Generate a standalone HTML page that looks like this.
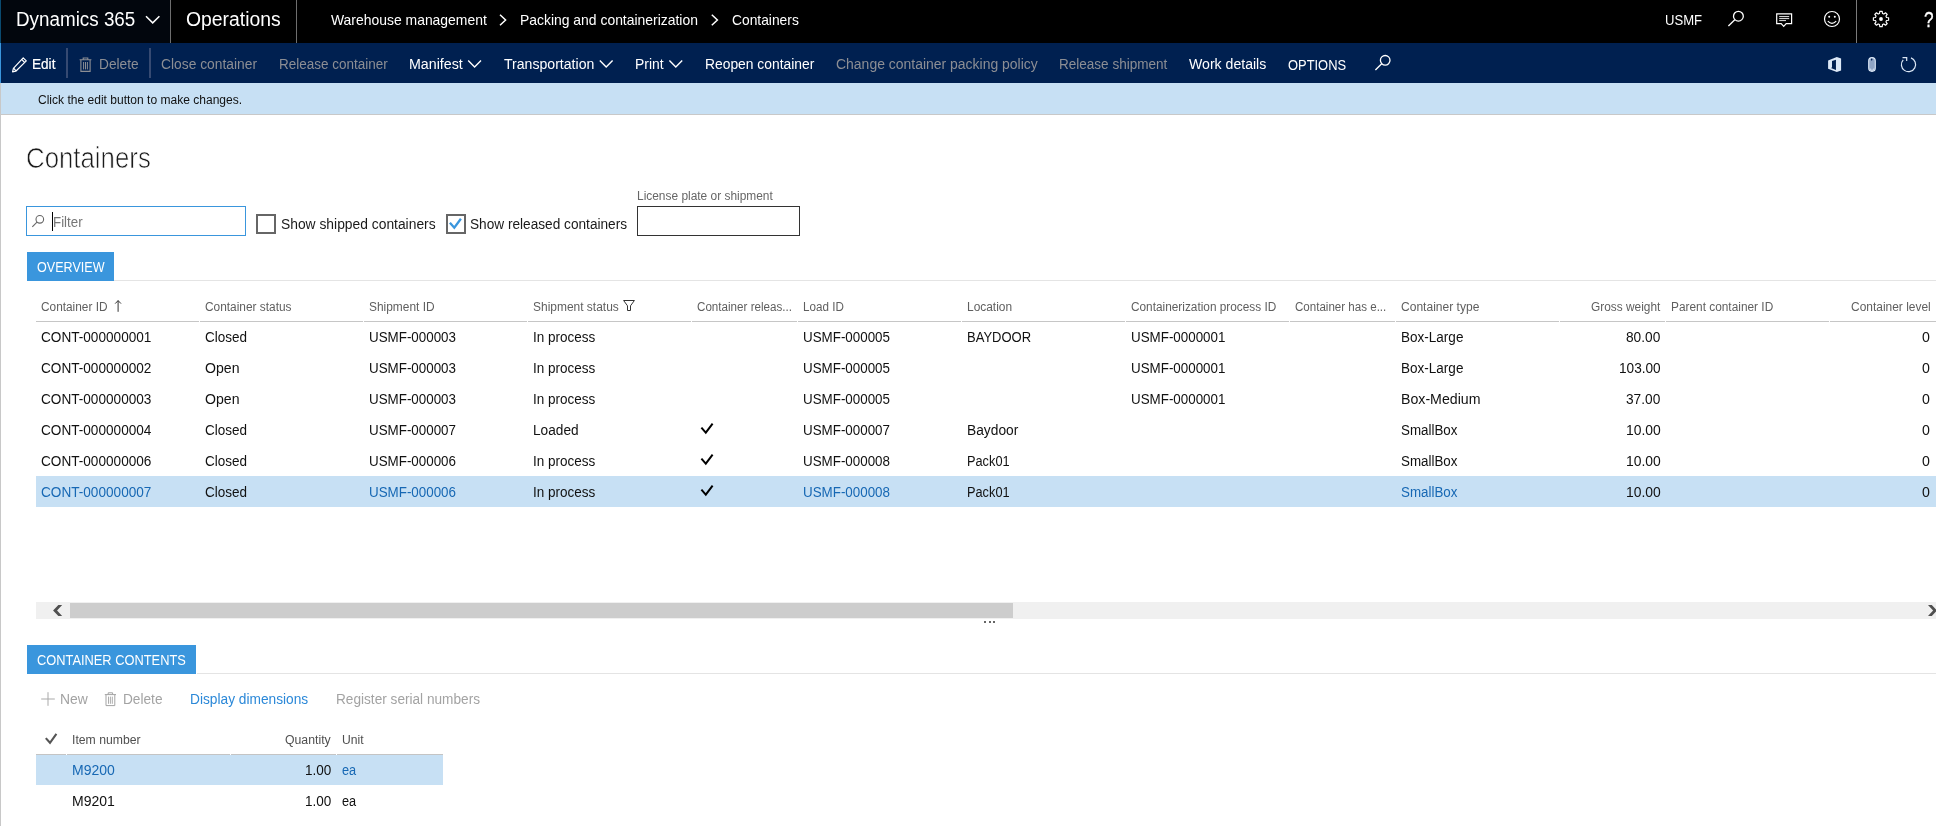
<!DOCTYPE html>
<html><head><meta charset="utf-8"><title>Containers</title>
<style>
html,body{margin:0;padding:0;}
body{width:1936px;height:826px;overflow:hidden;background:#fff;position:relative;font-family:"Liberation Sans",sans-serif;}
.t{position:absolute;white-space:pre;line-height:20px;height:20px;transform-origin:0 0;}
.b{position:absolute;}
svg{position:absolute;overflow:visible;}
</style></head><body>
<!-- bars -->
<div class="b" style="left:0;top:0;width:1936px;height:43px;background:#000"></div>
<div class="b" style="left:0;top:0;width:170px;height:43px;background:#02060d"></div>
<div class="b" style="left:0;top:0;width:1px;height:43px;background:#0a4a70"></div>
<div class="b" style="left:170px;top:0;width:1px;height:43px;background:#6e6e6e"></div>
<div class="b" style="left:296px;top:0;width:1px;height:43px;background:#6e6e6e"></div>
<div class="b" style="left:1856px;top:0;width:1px;height:43px;background:#7a7a7a"></div>
<div class="b" style="left:0;top:43px;width:1936px;height:40px;background:#002050"></div>
<div class="b" style="left:0;top:43px;width:1px;height:40px;background:#3a96dd"></div>
<div class="b" style="left:0;top:83px;width:1936px;height:31px;background:#c7e0f4"></div>
<div class="b" style="left:0;top:114px;width:1936px;height:1px;background:#c8c8c8"></div>
<div class="b" style="left:0;top:83px;width:1px;height:743px;background:#c8c8c8"></div>
<div class="b" style="left:66px;top:48px;width:2px;height:30px;background:#364a72"></div>
<div class="b" style="left:149px;top:48px;width:2px;height:30px;background:#364a72"></div>
<!-- filter row -->
<div class="b" style="left:26px;top:206px;width:218px;height:28px;border:1px solid #3a96dd;background:#fff"></div>
<div class="b" style="left:52px;top:212px;width:1px;height:19px;background:#000"></div>
<div class="b" style="left:256px;top:214px;width:16px;height:16px;border:2px solid #666"></div>
<div class="b" style="left:446px;top:214px;width:16px;height:16px;border:2px solid #666"></div>
<div class="b" style="left:637px;top:206px;width:161px;height:28px;border:1px solid #333;background:#fff"></div>
<!-- tabs -->
<div class="b" style="left:27px;top:252px;width:87px;height:29px;background:#3a96dd"></div>
<div class="b" style="left:114px;top:280px;width:1822px;height:1px;background:#e4e4e4"></div>
<div class="b" style="left:27px;top:645px;width:169px;height:29px;background:#3a96dd"></div>
<div class="b" style="left:197px;top:673px;width:1739px;height:1px;background:#e4e4e4"></div>
<!-- grid -->
<div class="b" style="left:36px;top:321px;width:1900px;height:1px;background:#c6c6c6"></div>
<div class="b" style="left:36px;top:476px;width:1900px;height:31px;background:#c7e0f4"></div>
<!-- scrollbar -->
<div class="b" style="left:36px;top:602px;width:1900px;height:17px;background:#f0f0f0"></div>
<div class="b" style="left:70px;top:603px;width:943px;height:15px;background:#cdcdcd"></div>
<div class="b" style="left:984px;top:621px;width:2px;height:2px;background:#666"></div>
<div class="b" style="left:988.5px;top:621px;width:2px;height:2px;background:#666"></div>
<div class="b" style="left:993px;top:621px;width:2px;height:2px;background:#666"></div>
<!-- bottom grid -->
<div class="b" style="left:36px;top:754px;width:407px;height:1px;background:#c4c4c4"></div>
<div class="b" style="left:36px;top:755px;width:407px;height:30px;background:#c7e0f4"></div>
<!-- column gaps -->
<div class="b" style="left:199px;top:321px;width:1px;height:1px;background:#fff"></div><div class="b" style="left:363px;top:321px;width:1px;height:1px;background:#fff"></div><div class="b" style="left:527px;top:321px;width:1px;height:1px;background:#fff"></div><div class="b" style="left:691px;top:321px;width:1px;height:1px;background:#fff"></div><div class="b" style="left:797px;top:321px;width:1px;height:1px;background:#fff"></div><div class="b" style="left:961px;top:321px;width:1px;height:1px;background:#fff"></div><div class="b" style="left:1125px;top:321px;width:1px;height:1px;background:#fff"></div><div class="b" style="left:1289px;top:321px;width:1px;height:1px;background:#fff"></div><div class="b" style="left:1395px;top:321px;width:1px;height:1px;background:#fff"></div><div class="b" style="left:1559px;top:321px;width:1px;height:1px;background:#fff"></div><div class="b" style="left:1665px;top:321px;width:1px;height:1px;background:#fff"></div><div class="b" style="left:1829px;top:321px;width:1px;height:1px;background:#fff"></div><div class="b" style="left:66px;top:754px;width:1px;height:1px;background:#fff"></div><div class="b" style="left:230px;top:754px;width:1px;height:1px;background:#fff"></div><div class="b" style="left:336px;top:754px;width:1px;height:1px;background:#fff"></div>
<svg width="1936" height="826" viewBox="0 0 1936 826" style="left:0;top:0" fill="none" stroke-linecap="butt" stroke-linejoin="miter">
<!-- top bar chevrons -->
<polyline points="146,16.2 152.7,22.9 159.4,16.2" stroke="#fff" stroke-width="1.5"/>
<polyline points="500,14.8 505.6,20 500,25.2" stroke="#fff" stroke-width="1.5"/>
<polyline points="711.8,14.8 717.4,20 711.8,25.2" stroke="#fff" stroke-width="1.5"/>
<!-- top search -->
<g stroke="#fff" stroke-width="1.3"><circle cx="1738.4" cy="16.2" r="4.9"/><line x1="1734.8" y1="19.8" x2="1728.4" y2="26"/></g>
<!-- message -->
<g stroke="#fff" stroke-width="1.2"><path d="M1776.7 13.9H1791.6V23.6H1786.2L1783.7 26.3L1781.2 23.6H1776.7Z"/>
<path d="M1779.2 16.6H1789.2M1779.2 18.6H1789.2M1779.2 20.6H1786" stroke-width="0.9"/></g>
<!-- smiley -->
<g stroke="#fff" stroke-width="1.2"><circle cx="1832" cy="19" r="7.5"/><path d="M1827.8 21.2Q1832 25.6 1836.2 21.2"/></g>
<circle cx="1829.2" cy="16.8" r="1" fill="#fff"/><circle cx="1834.8" cy="16.8" r="1" fill="#fff"/>
<!-- gear -->
<path d="M1879.52 13.49L1879.80 11.39L1882.20 11.39L1882.48 13.49L1883.85 14.06L1885.53 12.77L1887.23 14.47L1885.94 16.15L1886.51 17.52L1888.61 17.80L1888.61 20.20L1886.51 20.48L1885.94 21.85L1887.23 23.53L1885.53 25.23L1883.85 23.94L1882.48 24.51L1882.20 26.61L1879.80 26.61L1879.52 24.51L1878.15 23.94L1876.47 25.23L1874.77 23.53L1876.06 21.85L1875.49 20.48L1873.39 20.20L1873.39 17.80L1875.49 17.52L1876.06 16.15L1874.77 14.47L1876.47 12.77L1878.15 14.06Z" stroke="#fff" stroke-width="1.15" stroke-linejoin="round" fill="none"/>
<circle cx="1881" cy="19" r="1.9" fill="#fff"/>
<!-- pencil -->
<g stroke="#fff" stroke-width="1.2" stroke-linejoin="round"><path d="M23.2 57.8L26.3 60.9L15.8 71.2L12.6 71.9L13.4 68.4Z"/><path d="M21.6 59.4L24.7 62.5M13.6 68.2L16 70.8"/></g>
<!-- trash (action bar) -->
<g stroke="#8c8e94" stroke-width="1.1"><path d="M79.6 59.8H91.4M83.2 59.6V58H87.8V59.6M80.9 60V71.4H90.1V60"/><path d="M83.6 62V69.4M85.5 62V69.4M87.4 62V69.4" stroke-width="1"/></g>
<!-- action chevrons -->
<g stroke="#fff" stroke-width="1.4"><polyline points="468.2,60.6 474.6,67 481,60.6"/><polyline points="599.8,60.6 606.2,67 612.6,60.6"/><polyline points="669.4,60.6 675.8,67 682.2,60.6"/></g>
<!-- action search -->
<g stroke="#fff" stroke-width="1.3"><circle cx="1385.2" cy="60.3" r="4.8"/><line x1="1381.7" y1="63.8" x2="1375.4" y2="70"/></g>
<!-- office -->
<path fill-rule="evenodd" d="M1828.1 60.4L1836.8 57L1841.1 58.5V70.5L1836.8 71.9L1828.1 68.8ZM1832 61.05L1835.96 59.8V69.9L1830.9 67.9L1832 67.4Z" fill="#dce8f6" stroke="none"/>
<!-- paperclip -->
<g><rect x="1868.7" y="57.6" width="6.6" height="13.8" rx="3.3" fill="#8fa4c4" stroke="#dce8f6" stroke-width="1.1"/><ellipse cx="1871.7" cy="59.6" rx="0.75" ry="1.1" fill="#002050"/><path d="M1870.1 68.4A1.9 1.9 0 0 0 1873.9 68.4" stroke="#dce8f6" stroke-width="0.8" fill="none"/></g>
<!-- refresh -->
<g stroke="#dce8f6" stroke-width="1.2"><path d="M1911 57.9A7.1 7.1 0 1 1 1903.2 59.8"/><path d="M1902.5 57.6H1906.7V61"/></g>
<!-- filter search -->
<g stroke="#666" stroke-width="1.1"><circle cx="39.8" cy="219.3" r="3.8"/><line x1="37" y1="222.1" x2="32.3" y2="226.8"/></g>
<!-- checkbox check -->
<polyline points="449.9,222.7 454.3,227.7 460.9,218.7" stroke="#3a96dd" stroke-width="2.3"/>
<!-- sort arrow -->
<g stroke="#333" stroke-width="1"><line x1="118.1" y1="300.6" x2="118.1" y2="311.8"/><polyline points="115.2,303.6 118.1,300.6 121,303.6"/></g>
<!-- funnel -->
<path d="M623.6 300.5H634.4L630.5 305.8V310.5H627.5V305.8Z" stroke="#333" stroke-width="1" fill="none"/>
<!-- grid checks -->
<g stroke="#000" stroke-width="2"><polyline points="701.4,427.7 705.8,432.6 712.6,423.7"/><polyline points="701.4,458.7 705.8,463.6 712.6,454.7"/><polyline points="701.4,489.7 705.8,494.6 712.6,485.7"/></g>
<!-- scrollbar arrows -->
<polygon points="53.07,610.5 58.33,605.1 62.15,605.1 57.06,610.5 62.15,615.9 58.33,615.9" fill="#505050" stroke="none"/>
<polygon points="1937.08,610.5 1931.82,605.1 1928,605.1 1933.09,610.5 1928,615.9 1931.82,615.9" fill="#505050" stroke="none"/>
<!-- bottom toolbar plus + trash -->
<g stroke="#a9a9a9" stroke-width="1"><path d="M48 692.2V705.8M41.2 699H54.8"/></g>
<g stroke="#a3a3a3" stroke-width="1"><path d="M104.8 694.6H116M108.2 694.4V692.8H112.6V694.4M106 694.8V705.6H114.8V694.8"/><path d="M108.5 696.6V703.8M110.4 696.6V703.8M112.3 696.6V703.8" stroke-width="0.9"/></g>
<!-- header check -->
<polyline points="45.8,738.1 50,742.8 56.4,733.9" stroke="#555" stroke-width="2.1"/>
</svg>

<div id="tx" style="position:absolute;left:0;top:0;width:1936px;height:826px;will-change:transform;">
<span class="t" style="left:16.10px;top:9.00px;font-size:20.00px;color:#ffffff;transform:scaleX(0.9415)">Dynamics 365</span>
<span class="t" style="left:185.90px;top:9.00px;font-size:20.00px;color:#ffffff;transform:scaleX(0.9679)">Operations</span>
<span class="t" style="left:330.60px;top:10.00px;font-size:15.00px;color:#ffffff;transform:scaleX(0.9281)">Warehouse management</span>
<span class="t" style="left:520.30px;top:10.00px;font-size:15.00px;color:#ffffff;transform:scaleX(0.9275)">Packing and containerization</span>
<span class="t" style="left:731.60px;top:10.00px;font-size:15.00px;color:#ffffff;transform:scaleX(0.9208)">Containers</span>
<span class="t" style="left:1665.30px;top:10.00px;font-size:15.00px;color:#ffffff;transform:scaleX(0.8729)">USMF</span>
<span class="t" style="left:1923.80px;top:10.00px;font-size:22.00px;color:#ffffff;transform:scaleX(0.7837);-webkit-text-stroke:0.3px #fff">?</span>
<span class="t" style="left:32.20px;top:54.00px;font-size:14.00px;color:#ffffff;transform:scaleX(0.9699);-webkit-text-stroke:0.22px #fff">Edit</span>
<span class="t" style="left:98.80px;top:54.00px;font-size:14.00px;color:#8c8e94;transform:scaleX(0.9785)">Delete</span>
<span class="t" style="left:161.40px;top:54.00px;font-size:14.00px;color:#8c8e94;transform:scaleX(0.9868)">Close container</span>
<span class="t" style="left:278.60px;top:54.00px;font-size:14.00px;color:#8c8e94;transform:scaleX(0.9640)">Release container</span>
<span class="t" style="left:409.10px;top:54.00px;font-size:14.00px;color:#ffffff;transform:scaleX(1.0166)">Manifest</span>
<span class="t" style="left:503.60px;top:54.00px;font-size:14.00px;color:#ffffff;transform:scaleX(1.0061)">Transportation</span>
<span class="t" style="left:635.30px;top:54.00px;font-size:14.00px;color:#ffffff;transform:scaleX(0.9932)">Print</span>
<span class="t" style="left:705.10px;top:54.00px;font-size:14.00px;color:#ffffff;transform:scaleX(0.9889)">Reopen container</span>
<span class="t" style="left:836.10px;top:54.00px;font-size:14.00px;color:#8c8e94;transform:scaleX(0.9972)">Change container packing policy</span>
<span class="t" style="left:1059.30px;top:54.00px;font-size:14.00px;color:#8c8e94;transform:scaleX(0.9664)">Release shipment</span>
<span class="t" style="left:1189.30px;top:54.00px;font-size:14.00px;color:#ffffff;transform:scaleX(1.0068)">Work details</span>
<span class="t" style="left:1288.30px;top:55.00px;font-size:14.00px;color:#ffffff;transform:scaleX(0.9220)">OPTIONS</span>
<span class="t" style="left:38.30px;top:90.00px;font-size:12.50px;color:#111111;transform:scaleX(0.9630)">Click the edit button to make changes.</span>
<span class="t" style="left:26.10px;top:148.00px;font-size:29.00px;color:#1a1a1a;transform:scaleX(0.8898);-webkit-text-stroke:0.7px #fff">Containers</span>
<span class="t" style="left:53.20px;top:212.00px;font-size:14.00px;color:#767676;transform:scaleX(0.9510)">Filter</span>
<span class="t" style="left:280.80px;top:214.00px;font-size:14.00px;color:#1a1a1a;transform:scaleX(0.9883)">Show shipped containers</span>
<span class="t" style="left:470.30px;top:214.00px;font-size:14.00px;color:#1a1a1a;transform:scaleX(0.9751)">Show released containers</span>
<span class="t" style="left:637.10px;top:186.00px;font-size:12.00px;color:#666666;transform:scaleX(0.9931)">License plate or shipment</span>
<span class="t" style="left:36.60px;top:257.00px;font-size:14.00px;color:#ffffff;transform:scaleX(0.8976)">OVERVIEW</span>
<span class="t" style="left:36.70px;top:650.00px;font-size:14.00px;color:#ffffff;transform:scaleX(0.9168)">CONTAINER CONTENTS</span>
<span class="t" style="left:40.90px;top:297.00px;font-size:12.00px;color:#5f5f5f;transform:scaleX(0.9870)">Container ID</span>
<span class="t" style="left:204.60px;top:297.00px;font-size:12.00px;color:#5f5f5f;transform:scaleX(0.9898)">Container status</span>
<span class="t" style="left:368.80px;top:297.00px;font-size:12.00px;color:#5f5f5f;transform:scaleX(0.9935)">Shipment ID</span>
<span class="t" style="left:532.60px;top:297.00px;font-size:12.00px;color:#5f5f5f;transform:scaleX(0.9971)">Shipment status</span>
<span class="t" style="left:696.60px;top:297.00px;font-size:12.00px;color:#5f5f5f;transform:scaleX(0.9688)">Container releas...</span>
<span class="t" style="left:802.80px;top:297.00px;font-size:12.00px;color:#5f5f5f;transform:scaleX(0.9707)">Load ID</span>
<span class="t" style="left:967.10px;top:297.00px;font-size:12.00px;color:#5f5f5f;transform:scaleX(0.9939)">Location</span>
<span class="t" style="left:1130.90px;top:297.00px;font-size:12.00px;color:#5f5f5f;transform:scaleX(0.9857)">Containerization process ID</span>
<span class="t" style="left:1294.90px;top:297.00px;font-size:12.00px;color:#5f5f5f;transform:scaleX(0.9637)">Container has e...</span>
<span class="t" style="left:1401.00px;top:297.00px;font-size:12.00px;color:#5f5f5f;transform:scaleX(1.0045)">Container type</span>
<span class="t" style="left:1590.80px;top:297.00px;font-size:12.00px;color:#5f5f5f;transform:scaleX(0.9896)">Gross weight</span>
<span class="t" style="left:1671.00px;top:297.00px;font-size:12.00px;color:#5f5f5f;transform:scaleX(0.9885)">Parent container ID</span>
<span class="t" style="left:1850.60px;top:297.00px;font-size:12.00px;color:#5f5f5f;transform:scaleX(0.9957)">Container level</span>
<span class="t" style="left:40.90px;top:327.00px;font-size:14.00px;color:#111111;transform:scaleX(0.9715)">CONT-000000001</span>
<span class="t" style="left:204.60px;top:327.00px;font-size:14.00px;color:#111111;transform:scaleX(0.9634)">Closed</span>
<span class="t" style="left:368.80px;top:327.00px;font-size:14.00px;color:#111111;transform:scaleX(0.9556)">USMF-000003</span>
<span class="t" style="left:532.90px;top:327.00px;font-size:14.00px;color:#111111;transform:scaleX(0.9645)">In process</span>
<span class="t" style="left:803.20px;top:327.00px;font-size:14.00px;color:#111111;transform:scaleX(0.9556)">USMF-000005</span>
<span class="t" style="left:967.10px;top:327.00px;font-size:14.00px;color:#111111;transform:scaleX(0.9292)">BAYDOOR</span>
<span class="t" style="left:1130.90px;top:327.00px;font-size:14.00px;color:#111111;transform:scaleX(0.9552)">USMF-0000001</span>
<span class="t" style="left:1401.00px;top:327.00px;font-size:14.00px;color:#111111;transform:scaleX(0.9660)">Box-Large</span>
<span class="t" style="left:1626.20px;top:327.00px;font-size:14.00px;color:#111111;transform:scaleX(0.9787)">80.00</span>
<span class="t" style="left:1922.40px;top:327.00px;font-size:14.00px;color:#111111;transform:scaleX(1.0132)">0</span>
<span class="t" style="left:40.90px;top:358.00px;font-size:14.00px;color:#111111;transform:scaleX(0.9715)">CONT-000000002</span>
<span class="t" style="left:204.60px;top:358.00px;font-size:14.00px;color:#111111;transform:scaleX(1.0073)">Open</span>
<span class="t" style="left:368.80px;top:358.00px;font-size:14.00px;color:#111111;transform:scaleX(0.9556)">USMF-000003</span>
<span class="t" style="left:532.90px;top:358.00px;font-size:14.00px;color:#111111;transform:scaleX(0.9645)">In process</span>
<span class="t" style="left:803.20px;top:358.00px;font-size:14.00px;color:#111111;transform:scaleX(0.9556)">USMF-000005</span>
<span class="t" style="left:1130.90px;top:358.00px;font-size:14.00px;color:#111111;transform:scaleX(0.9552)">USMF-0000001</span>
<span class="t" style="left:1401.00px;top:358.00px;font-size:14.00px;color:#111111;transform:scaleX(0.9660)">Box-Large</span>
<span class="t" style="left:1618.80px;top:358.00px;font-size:14.00px;color:#111111;transform:scaleX(0.9737)">103.00</span>
<span class="t" style="left:1922.40px;top:358.00px;font-size:14.00px;color:#111111;transform:scaleX(1.0132)">0</span>
<span class="t" style="left:40.90px;top:389.00px;font-size:14.00px;color:#111111;transform:scaleX(0.9715)">CONT-000000003</span>
<span class="t" style="left:204.60px;top:389.00px;font-size:14.00px;color:#111111;transform:scaleX(1.0073)">Open</span>
<span class="t" style="left:368.80px;top:389.00px;font-size:14.00px;color:#111111;transform:scaleX(0.9556)">USMF-000003</span>
<span class="t" style="left:532.90px;top:389.00px;font-size:14.00px;color:#111111;transform:scaleX(0.9645)">In process</span>
<span class="t" style="left:803.20px;top:389.00px;font-size:14.00px;color:#111111;transform:scaleX(0.9556)">USMF-000005</span>
<span class="t" style="left:1130.90px;top:389.00px;font-size:14.00px;color:#111111;transform:scaleX(0.9552)">USMF-0000001</span>
<span class="t" style="left:1401.00px;top:389.00px;font-size:14.00px;color:#111111;transform:scaleX(1.0115)">Box-Medium</span>
<span class="t" style="left:1626.20px;top:389.00px;font-size:14.00px;color:#111111;transform:scaleX(0.9787)">37.00</span>
<span class="t" style="left:1922.40px;top:389.00px;font-size:14.00px;color:#111111;transform:scaleX(1.0132)">0</span>
<span class="t" style="left:40.90px;top:420.00px;font-size:14.00px;color:#111111;transform:scaleX(0.9715)">CONT-000000004</span>
<span class="t" style="left:204.60px;top:420.00px;font-size:14.00px;color:#111111;transform:scaleX(0.9634)">Closed</span>
<span class="t" style="left:368.80px;top:420.00px;font-size:14.00px;color:#111111;transform:scaleX(0.9556)">USMF-000007</span>
<span class="t" style="left:532.90px;top:420.00px;font-size:14.00px;color:#111111;transform:scaleX(0.9761)">Loaded</span>
<span class="t" style="left:803.20px;top:420.00px;font-size:14.00px;color:#111111;transform:scaleX(0.9556)">USMF-000007</span>
<span class="t" style="left:967.10px;top:420.00px;font-size:14.00px;color:#111111;transform:scaleX(0.9836)">Baydoor</span>
<span class="t" style="left:1401.00px;top:420.00px;font-size:14.00px;color:#111111;transform:scaleX(0.9537)">SmallBox</span>
<span class="t" style="left:1625.70px;top:420.00px;font-size:14.00px;color:#111111;transform:scaleX(0.9930)">10.00</span>
<span class="t" style="left:1922.40px;top:420.00px;font-size:14.00px;color:#111111;transform:scaleX(1.0132)">0</span>
<span class="t" style="left:40.90px;top:451.00px;font-size:14.00px;color:#111111;transform:scaleX(0.9715)">CONT-000000006</span>
<span class="t" style="left:204.60px;top:451.00px;font-size:14.00px;color:#111111;transform:scaleX(0.9634)">Closed</span>
<span class="t" style="left:368.80px;top:451.00px;font-size:14.00px;color:#111111;transform:scaleX(0.9556)">USMF-000006</span>
<span class="t" style="left:532.90px;top:451.00px;font-size:14.00px;color:#111111;transform:scaleX(0.9645)">In process</span>
<span class="t" style="left:803.20px;top:451.00px;font-size:14.00px;color:#111111;transform:scaleX(0.9556)">USMF-000008</span>
<span class="t" style="left:967.10px;top:451.00px;font-size:14.00px;color:#111111;transform:scaleX(0.9121)">Pack01</span>
<span class="t" style="left:1401.00px;top:451.00px;font-size:14.00px;color:#111111;transform:scaleX(0.9537)">SmallBox</span>
<span class="t" style="left:1625.70px;top:451.00px;font-size:14.00px;color:#111111;transform:scaleX(0.9930)">10.00</span>
<span class="t" style="left:1922.40px;top:451.00px;font-size:14.00px;color:#111111;transform:scaleX(1.0132)">0</span>
<span class="t" style="left:40.90px;top:482.00px;font-size:14.00px;color:#1768b4;transform:scaleX(0.9715)">CONT-000000007</span>
<span class="t" style="left:204.60px;top:482.00px;font-size:14.00px;color:#111111;transform:scaleX(0.9634)">Closed</span>
<span class="t" style="left:368.80px;top:482.00px;font-size:14.00px;color:#1768b4;transform:scaleX(0.9556)">USMF-000006</span>
<span class="t" style="left:532.90px;top:482.00px;font-size:14.00px;color:#111111;transform:scaleX(0.9645)">In process</span>
<span class="t" style="left:803.20px;top:482.00px;font-size:14.00px;color:#1768b4;transform:scaleX(0.9556)">USMF-000008</span>
<span class="t" style="left:967.10px;top:482.00px;font-size:14.00px;color:#111111;transform:scaleX(0.9121)">Pack01</span>
<span class="t" style="left:1401.00px;top:482.00px;font-size:14.00px;color:#1768b4;transform:scaleX(0.9537)">SmallBox</span>
<span class="t" style="left:1625.70px;top:482.00px;font-size:14.00px;color:#111111;transform:scaleX(0.9930)">10.00</span>
<span class="t" style="left:1922.40px;top:482.00px;font-size:14.00px;color:#111111;transform:scaleX(1.0132)">0</span>
<span class="t" style="left:60.30px;top:689.00px;font-size:14.00px;color:#a3a3a3;transform:scaleX(0.9923)">New</span>
<span class="t" style="left:123.20px;top:689.00px;font-size:14.00px;color:#a3a3a3;transform:scaleX(0.9761)">Delete</span>
<span class="t" style="left:190.20px;top:689.00px;font-size:14.00px;color:#2b88d8;transform:scaleX(0.9800)">Display dimensions</span>
<span class="t" style="left:335.60px;top:689.00px;font-size:14.00px;color:#a3a3a3;transform:scaleX(0.9740)">Register serial numbers</span>
<span class="t" style="left:72.10px;top:730.00px;font-size:12.00px;color:#4f4f4f;transform:scaleX(1.0184)">Item number</span>
<span class="t" style="left:285.30px;top:730.00px;font-size:12.00px;color:#4f4f4f;transform:scaleX(1.0223)">Quantity</span>
<span class="t" style="left:342.20px;top:730.00px;font-size:12.00px;color:#4f4f4f;transform:scaleX(1.0120)">Unit</span>
<span class="t" style="left:71.90px;top:760.00px;font-size:14.00px;color:#1768b4;transform:scaleX(0.9997)">M9200</span>
<span class="t" style="left:305.10px;top:760.00px;font-size:14.00px;color:#111111;transform:scaleX(0.9651)">1.00</span>
<span class="t" style="left:342.20px;top:760.00px;font-size:14.00px;color:#1768b4;transform:scaleX(0.9115)">ea</span>
<span class="t" style="left:71.90px;top:791.00px;font-size:14.00px;color:#111111;transform:scaleX(0.9997)">M9201</span>
<span class="t" style="left:305.10px;top:791.00px;font-size:14.00px;color:#111111;transform:scaleX(0.9651)">1.00</span>
<span class="t" style="left:342.20px;top:791.00px;font-size:14.00px;color:#111111;transform:scaleX(0.9115)">ea</span>
</div>
</body></html>
